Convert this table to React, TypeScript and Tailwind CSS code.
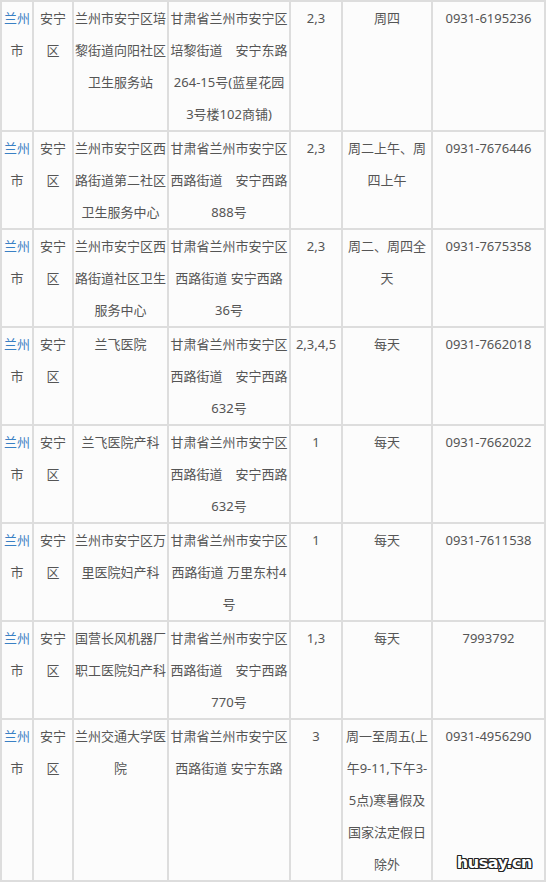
type Cell = string[];
type Row = Cell[];

const rows: Row[] = [
  [
    ['兰州', '市'],
    ['安宁', '区'],
    ['兰州市安宁区培', '黎街道向阳社区', '卫生服务站'],
    ['甘肃省兰州市安宁区', '培黎街道　安宁东路', '264-15号(蓝星花园', '3号楼102商铺)'],
    ['2,3'],
    ['周四'],
    ['0931-6195236'],
  ],
  [
    ['兰州', '市'],
    ['安宁', '区'],
    ['兰州市安宁区西', '路街道第二社区', '卫生服务中心'],
    ['甘肃省兰州市安宁区', '西路街道　安宁西路', '888号'],
    ['2,3'],
    ['周二上午、周', '四上午'],
    ['0931-7676446'],
  ],
  [
    ['兰州', '市'],
    ['安宁', '区'],
    ['兰州市安宁区西', '路街道社区卫生', '服务中心'],
    ['甘肃省兰州市安宁区', '西路街道 安宁西路', '36号'],
    ['2,3'],
    ['周二、周四全', '天'],
    ['0931-7675358'],
  ],
  [
    ['兰州', '市'],
    ['安宁', '区'],
    ['兰飞医院'],
    ['甘肃省兰州市安宁区', '西路街道　安宁西路', '632号'],
    ['2,3,4,5'],
    ['每天'],
    ['0931-7662018'],
  ],
  [
    ['兰州', '市'],
    ['安宁', '区'],
    ['兰飞医院产科'],
    ['甘肃省兰州市安宁区', '西路街道　安宁西路', '632号'],
    ['1'],
    ['每天'],
    ['0931-7662022'],
  ],
  [
    ['兰州', '市'],
    ['安宁', '区'],
    ['兰州市安宁区万', '里医院妇产科'],
    ['甘肃省兰州市安宁区', '西路街道 万里东村4', '号'],
    ['1'],
    ['每天'],
    ['0931-7611538'],
  ],
  [
    ['兰州', '市'],
    ['安宁', '区'],
    ['国营长风机器厂', '职工医院妇产科'],
    ['甘肃省兰州市安宁区', '西路街道　安宁西路', '770号'],
    ['1,3'],
    ['每天'],
    ['7993792'],
  ],
  [
    ['兰州', '市'],
    ['安宁', '区'],
    ['兰州交通大学医', '院'],
    ['甘肃省兰州市安宁区', '西路街道 安宁东路'],
    ['3'],
    ['周一至周五(上', '午9-11,下午3-', '5点)寒暑假及', '国家法定假日', '除外'],
    ['0931-4956290'],
  ],
];

function CellText({ lines, col }: { lines: Cell; col: number }) {
  return (
    <>
      {lines.map((line, i) => (
        <div key={i} className="whitespace-pre">
          {col === 0 && i === 0 ? <span className="text-[#3a80c4]">{line}</span> : line}
        </div>
      ))}
    </>
  );
}

export default function App() {
  return (
    <div className="relative w-[547px] bg-white">
      <div className="grid grid-cols-[32px_40px_95px_122px_52px_90px_115px] font-['Noto_Sans','Noto_Sans_CJK_SC',sans-serif] text-[13px] leading-[32px] text-[#555]">
        {rows.map((row, r) =>
          row.map((cell, c) => (
            <div
              key={`${r}-${c}`}
              className={
                'border-l-2 border-t-2 border-[#dddddd] bg-[#fcfcfc] text-center' +
                (c === 6 ? ' border-r-2' : '') +
                (r === rows.length - 1 ? ' border-b-2' : '')
              }
            >
              <CellText lines={cell} col={c} />
            </div>
          )),
        )}
      </div>
      <div className="absolute right-[15px] bottom-[11px] font-['DejaVu_Sans',sans-serif] text-[16px] font-bold leading-none tracking-[-0.4px] text-white [text-shadow:-1px_-1px_0_#222,1px_-1px_0_#222,-1px_1px_0_#222,1px_1px_0_#222,0_1px_0_#222,0_-1px_0_#222,1px_0_0_#222,-1px_0_0_#222]">
        husay.cn
      </div>
    </div>
  );
}
